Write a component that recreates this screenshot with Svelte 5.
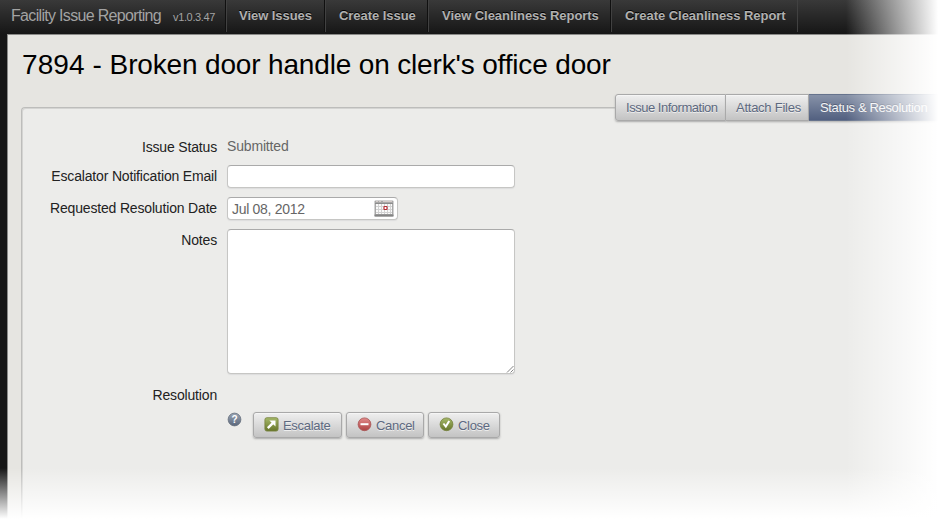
<script>
  const nav = [
    { label: 'View Issues', width: 99 },
    { label: 'Create Issue', width: 103 },
    { label: 'View Cleanliness Reports', width: 183 },
    { label: 'Create Cleanliness Report', width: 187 }
  ];
  let notes = $state('');
  let email = $state('');
</script>

<div class="app">
  <header>
    <div class="brand"><span class="name">Facility Issue Reporting</span><span class="version">v1.0.3.47</span></div>
    <nav>
      {#each nav as item}
        <a href="#top" style="width: {item.width}px">{item.label}</a>
      {/each}
    </nav>
  </header>

  <main>
    <h1><span class="number">7894 -</span> Broken door handle on clerk's office door</h1>
    <section class="panel">
      <div class="tabs">
        <button class="info">Issue Information</button>
        <button class="attach">Attach Files</button>
        <button class="active">Status &amp; Resolution</button>
      </div>
      <form>
        <div class="row status"><span class="label">Issue Status</span><span class="value">Submitted</span></div>
        <div class="row email"><label class="label" for="email">Escalator Notification Email</label><input id="email" bind:value={email} /></div>
        <div class="row date">
          <span class="label">Requested Resolution Date</span>
          <div class="datebox">
            <span>Jul 08, 2012</span>
            <svg width="20" height="17" viewBox="0 0 20 17">
              <rect x=".5" y=".5" width="19" height="16" rx="1" fill="#a8a8a8" />
              <path d="M2 1.5h2M5 1.5h2M9 1.5h9" stroke="#d5ccc9" />
              <path d="M1 3.5h18" stroke="#8c8c8c" />
              <rect x="2" y="4" width="16" height="10" fill="#fafafa" />
              <path d="M4.5 4v10M7.5 4v10M10.5 4v10M13.5 4v10M16.5 4v10M2 6.5h16M2 9.5h16M2 12.5h16" stroke="#d2d2d2" />
              <path d="M.5 15.5h19" stroke="#848484" stroke-width="2" />
              <rect x="10" y="6.5" width="3" height="3" rx=".5" fill="#fff" stroke="#b52b32" stroke-width="1.2" />
            </svg>
          </div>
        </div>
        <div class="row notes"><label class="label" for="notes">Notes</label><div class="area"><textarea id="notes" bind:value={notes}></textarea><svg class="grip" width="8" height="8" viewBox="0 0 8 8"><path d="M1 7.5 7.5 1M4.5 7.5l3-3" stroke="#777" stroke-width=".9" fill="none" /></svg></div></div>
        <div class="row resolution"><span class="label">Resolution</span></div>
        <div class="actions">
          <svg class="help" width="15" height="15" viewBox="0 0 15 15">
            <defs><linearGradient id="blue" x2="0" y2="1"><stop stop-color="#9ba6b5" /><stop offset="1" stop-color="#59667b" /></linearGradient></defs>
            <circle cx="7.5" cy="7.5" r="6.4" fill="url(#blue)" stroke="#68717e" stroke-width=".8" />
            <text x="7.5" y="11" text-anchor="middle" font-size="10" font-weight="bold" fill="#fff">?</text>
          </svg>
          <button type="button" class="b1">
            <svg width="15" height="15" viewBox="0 0 15 15">
              <defs><linearGradient id="green" x2="0" y2="1"><stop stop-color="#a6b96a" /><stop offset="1" stop-color="#667529" /></linearGradient></defs>
              <rect x=".9" y=".7" width="13.2" height="13.4" rx="2" fill="url(#green)" stroke="#76813e" stroke-width=".8" />
              <path d="M3.8 11.1 9 5.9" stroke="#fff" stroke-width="2.4" /><path d="M5.4 3.4h6.1v6.2z" fill="#fff" />
            </svg><span>Escalate</span>
          </button>
          <button type="button" class="b2">
            <svg width="15" height="15" viewBox="0 0 15 15">
              <defs><linearGradient id="red" x2="0" y2="1"><stop stop-color="#e18a8a" /><stop offset="1" stop-color="#ad4141" /></linearGradient></defs>
              <circle cx="7.5" cy="7.3" r="6.4" fill="url(#red)" stroke="#a75656" stroke-width=".8" />
              <path d="M3.5 7.2h8" stroke="#fff" stroke-width="2" />
            </svg><span>Cancel</span>
          </button>
          <button type="button" class="b3">
            <svg width="15" height="15" viewBox="0 0 15 15">
              <circle cx="7.5" cy="7.3" r="6.4" fill="url(#green)" stroke="#76813e" stroke-width=".8" />
              <path d="M4.4 6.5 6.8 9.5 10.2 3.9" stroke="#fff" stroke-width="2" fill="none" />
            </svg><span>Close</span>
          </button>
        </div>
      </form>
    </section>
  </main>
  <div class="fade right"></div>
  <div class="fade bottom"></div>
</div>

<style>
  :global(body) { margin: 0; background: #fff; }
  .app { position: relative; width: 940px; height: 522px; overflow: hidden; background: #161616; font-family: "Liberation Sans", Arial, sans-serif; box-sizing: border-box; }
  .app :global(*) { box-sizing: border-box; }
  header { display: flex; height: 34px; background: linear-gradient(#393939, #161616); }
  .brand { width: 225px; padding-left: 11px; color: #a3a3a3; white-space: nowrap; display: flex; align-items: baseline; line-height: 31px; }
  .name { font-size: 16px; width: 162px; letter-spacing: -.68px; }
  .version { font-size: 11px; letter-spacing: -.35px; }
  nav { display: flex; height: 32px; border-right: 1px solid #414141; }
  nav a { display: block; padding-left: 14px; border-left: 1px solid #101010; box-shadow: inset 1px 0 #414141; color: #b0b0b0; font-size: 13px; font-weight: bold; line-height: 31px; letter-spacing: -.05px; text-decoration: none; white-space: nowrap; text-shadow: 0 -1px #000; }
  nav a:first-child { padding-left: 13px; }
  main { height: 488px; margin-left: 7px; border: solid #8a8a88; border-width: 1px 0 0 1px; padding: 0 0 0 13px; background: #e6e5e1; }
  h1 { margin: 0; height: 72px; padding: 14px 0 0 1px; font-size: 28px; line-height: 32px; letter-spacing: -.16px; font-weight: normal; color: #000; white-space: nowrap; }
  .number { letter-spacing: .1px; }
  .panel { height: 430px; border: solid #bdbdbb; border-width: 1px 0 0 1px; border-radius: 4px 0 0; background: #ececea; box-shadow: inset 1px 1px #d4d4d2; }
  .tabs { display: flex; height: 27px; margin: -14px 0 0 593px; }
  button { font: 13px "Liberation Sans", Arial, sans-serif; color: #5d6980; text-shadow: 0 1px #eee; border: 1px solid #a9a9a9; background: linear-gradient(#efefef, #c3c3c3); padding: 0; white-space: nowrap; box-shadow: 0 1px 2px #aaa, inset 0 1px #f5f5f5; }
  .tabs button { text-align: left; padding-left: 10px; flex: none; }
  .tabs .info { width: 111px; letter-spacing: -.48px; border-radius: 3px 0 0 3px; }
  .tabs .attach { width: 83px; border-left: 0; letter-spacing: -.25px; }
  .tabs .active { width: 140px; padding-left: 11px; border-color: #66738c; border-left: 0; letter-spacing: -.36px; color: #f4f4f4; background: linear-gradient(#8792a8, #526080); text-shadow: 0 -1px #566078; box-shadow: 0 1px 2px #aaa; }
  form { padding-top: 15px; font-size: 14px; letter-spacing: -.17px; }
  .row { display: flex; gap: 10px; }
  .label { width: 195px; text-align: right; color: #222; white-space: nowrap; line-height: 18px; padding-top: 2px; }
  .status { height: 29px; color: #666; }
  .value { line-height: 21px; }
  .email { height: 32px; }
  input, textarea, .datebox { background: #fff; border: 1px solid #c6c6c4; border-top-color: #aaa; border-radius: 4px; box-shadow: 0 1px 1px #ddd; outline: 0; }
  input { width: 288px; height: 23px; }
  .date { height: 32px; }
  .datebox { display: flex; justify-content: space-between; align-items: center; width: 171px; height: 23px; padding: 0 3px 0 4px; color: #666; letter-spacing: -.3px; }
  .notes { height: 155px; }
  .area { position: relative; height: 145px; }
  textarea { display: block; width: 288px; height: 145px; resize: none; }
  .grip { position: absolute; right: 1px; bottom: 1px; }
  .resolution { height: 28px; }
  .actions { display: flex; padding-left: 205px; }
  .help { margin-right: 11px; }
  .actions button { height: 26px; border-radius: 3px; display: flex; align-items: center; padding-left: 10px; gap: 4px; margin-right: 4px; letter-spacing: -.3px; }
  .actions button svg { margin-top: -2px; }
  .b1 { width: 89px; }
  .b2 { width: 78px; }
  .b3 { width: 72px; }
  .fade { position: absolute; pointer-events: none; }
  .right { right: 0; top: 0; width: 94px; height: 522px; background: linear-gradient(90deg, #fff0, #fff 98%); }
  .bottom { left: 0; bottom: 0; width: 940px; height: 54px; background: linear-gradient(#fff0, #fff 94%); }
</style>
